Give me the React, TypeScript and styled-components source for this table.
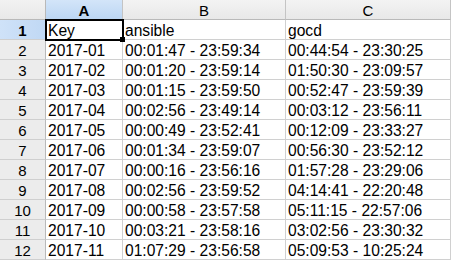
import React from 'react';
import styled, { createGlobalStyle } from 'styled-components';

const GlobalStyle = createGlobalStyle`
  html, body {
    margin: 0;
    padding: 0;
    background: #fff;
  }
`;

const Sheet = styled.div`
  display: grid;
  grid-template-columns: 46px 77px 163px 165px;
  grid-auto-rows: 20px;
  width: 451px;
  height: 261px;
  overflow: hidden;
  font-family: 'Liberation Sans', Arial, sans-serif;
  font-size: 15.6px;
  color: #000;
  background: #fff;
`;

const Corner = styled.div`
  background: linear-gradient(#f2f2f2, #e8e8e8);
  border-right: 1px solid #b9b9b9;
  border-bottom: 1px solid #b9b9b9;
`;

const ColHeader = styled.div<{ $active?: boolean }>`
  display: flex;
  align-items: center;
  justify-content: center;
  background: ${p => (p.$active ? 'linear-gradient(#d3e5f9, #bcd6f3)' : 'linear-gradient(#f3f3f3, #e8e8e8)')};
  border-right: 1px solid #c4c4c4;
  border-bottom: 1px solid #b9b9b9;
  font-weight: ${p => (p.$active ? 'bold' : 'normal')};
  font-size: 15px;
  padding-top: 1px;
`;

const RowHeader = styled.div<{ $active?: boolean }>`
  display: flex;
  align-items: center;
  justify-content: center;
  background: ${p => (p.$active ? 'linear-gradient(90deg, #cfe2f8, #c0d8f4)' : '#ececec')};
  border-right: 1px solid #b9b9b9;
  border-bottom: 1px solid #cfcfcf;
  font-weight: ${p => (p.$active ? 'bold' : 'normal')};
  font-size: 15px;
  padding-top: 1px;
`;

const Cell = styled.div<{ $selected?: boolean }>`
  position: relative;
  display: flex;
  align-items: center;
  padding: 2px 0 0 2px;
  border-right: 1px solid #d0d0d0;
  border-bottom: 1px solid #d0d0d0;
  white-space: nowrap;
  overflow: hidden;
  ${p =>
    p.$selected &&
    `
    overflow: visible;
    outline: 2px solid #000;
    outline-offset: -1px;
    z-index: 1;
  `}
`;

const Handle = styled.span`
  position: absolute;
  right: -3px;
  bottom: -3px;
  width: 5px;
  height: 5px;
  background: #000;
`;

const rows: string[][] = [
  ['Key', 'ansible', 'gocd'],
  ['2017-01', '00:01:47 - 23:59:34', '00:44:54 - 23:30:25'],
  ['2017-02', '00:01:20 - 23:59:14', '01:50:30 - 23:09:57'],
  ['2017-03', '00:01:15 - 23:59:50', '00:52:47 - 23:59:39'],
  ['2017-04', '00:02:56 - 23:49:14', '00:03:12 - 23:56:11'],
  ['2017-05', '00:00:49 - 23:52:41', '00:12:09 - 23:33:27'],
  ['2017-06', '00:01:34 - 23:59:07', '00:56:30 - 23:52:12'],
  ['2017-07', '00:00:16 - 23:56:16', '01:57:28 - 23:29:06'],
  ['2017-08', '00:02:56 - 23:59:52', '04:14:41 - 22:20:48'],
  ['2017-09', '00:00:58 - 23:57:58', '05:11:15 - 22:57:06'],
  ['2017-10', '00:03:21 - 23:58:16', '03:02:56 - 23:30:32'],
  ['2017-11', '01:07:29 - 23:56:58', '05:09:53 - 10:25:24'],
];

const App: React.FC = () => (
  <>
    <GlobalStyle />
    <Sheet>
      <Corner />
      <ColHeader $active>A</ColHeader>
      <ColHeader>B</ColHeader>
      <ColHeader>C</ColHeader>
      {rows.map((row, i) => (
        <React.Fragment key={i}>
          <RowHeader $active={i === 0}>{i + 1}</RowHeader>
          {row.map((value, j) => {
            const selected = i === 0 && j === 0;
            return (
              <Cell key={j} $selected={selected}>
                {value}
                {selected && <Handle />}
              </Cell>
            );
          })}
        </React.Fragment>
      ))}
    </Sheet>
  </>
);

export default App;
